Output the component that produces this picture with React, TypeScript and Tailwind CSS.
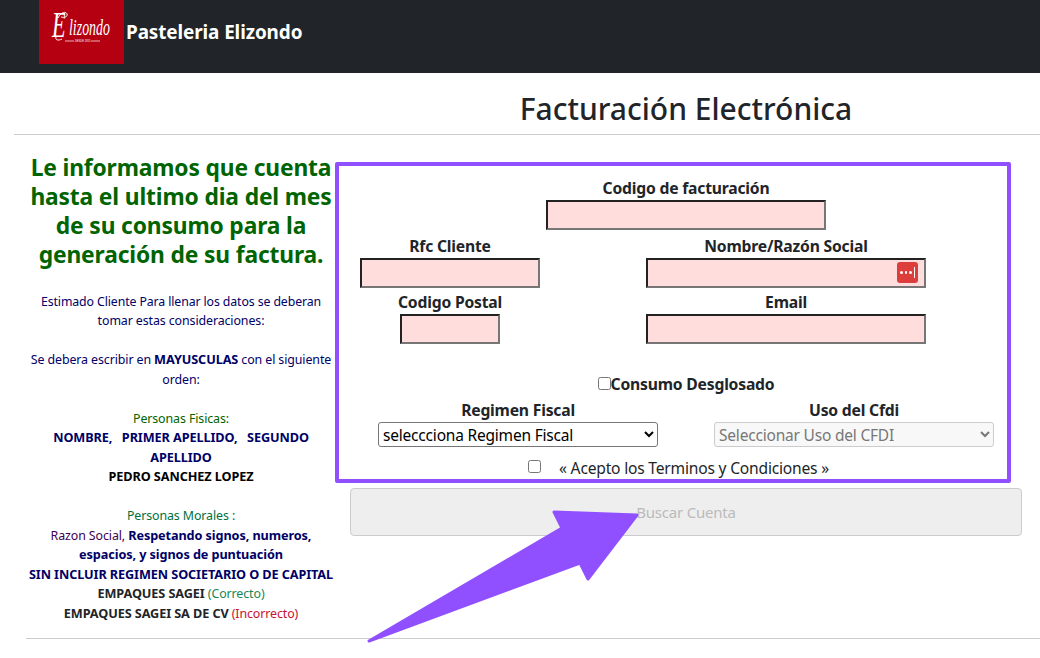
const inputBox =
  'block h-[30px] border-2 border-t-[#222222] border-l-[#222222] border-r-[#767676] border-b-[#767676] bg-[#ffdddd] outline-none'
const labelText = 'block h-6 text-center text-[15.7px] font-bold leading-6 tracking-[-0.2px] text-[#212529]'

function Logo() {
  return (
    <svg viewBox="0 0 85 64" className="h-16 w-[85px] shrink-0 bg-[#b50012]">
      <path d="M19 18c3-6 8-7 9-4s-3 4-6 3M17 37c-1 3 2 4 6 2" fill="none" stroke="#ffffff" strokeWidth="1" />
      <g transform="translate(13 37) scale(0.62 1)">
        <text fill="#ffffff" fontSize="36" fontStyle="italic" fontFamily="'Liberation Serif', serif">
          E
        </text>
      </g>
      <g transform="translate(30 35) scale(0.58 1)">
        <text fill="#ffffff" fontSize="24" fontStyle="italic" fontFamily="'Liberation Serif', serif">
          lizondo
        </text>
      </g>
      <path d="M26 41h9M52 41h9" stroke="#ffffff" strokeWidth="0.7" />
      <text x="36" y="42.2" fill="#ffffff" fontSize="2.6" fontFamily="'Liberation Sans', sans-serif">
        DESDE 1955
      </text>
    </svg>
  )
}

function Field({ label, width, children }: { label: string; width: string; children?: React.ReactNode }) {
  return (
    <div className="flex flex-col items-center">
      <label className={labelText}>{label}</label>
      <div className="relative">
        <input type="text" className={`${inputBox} ${width}`} />
        {children}
      </div>
    </div>
  )
}

function Notes() {
  return (
    <div className="w-[310px] shrink-0 pt-[18px] text-center">
      <h3 className="mb-[22.5px] text-[22.8px] font-bold leading-[29px] tracking-[-0.15px] text-[#006400]">
        <span className="block whitespace-nowrap">Le informamos que cuenta</span>
        <span className="block whitespace-nowrap">hasta el ultimo dia del mes</span>
        <span className="block whitespace-nowrap">de su consumo para la</span>
        <span className="block whitespace-nowrap">generación de su factura.</span>
      </h3>
      <div className="text-[12.4px] leading-[19.5px] tracking-[-0.1px] text-[#000066] [&_b]:text-[12.7px] [&>p]:whitespace-nowrap">
        <p className="text-[12.3px]">Estimado Cliente Para llenar los datos se deberan</p>
        <p>tomar estas consideraciones:</p>
        <p>&nbsp;</p>
        <p>
          Se debera escribir en <b>MAYUSCULAS</b> con el siguiente
        </p>
        <p>orden:</p>
        <p>&nbsp;</p>
        <p className="text-[#006400]">Personas Fisicas:</p>
        <p>
          <b>NOMBRE, &nbsp; PRIMER APELLIDO, &nbsp; SEGUNDO</b>
        </p>
        <p>
          <b>APELLIDO</b>
        </p>
        <p className="text-black">
          <b>PEDRO SANCHEZ LOPEZ</b>
        </p>
        <p>&nbsp;</p>
        <p className="text-[#00703c]">Personas Morales :</p>
        <p className="text-[#400050]">
          Razon Social, <b className="text-[#000066]">Respetando signos, numeros,</b>
        </p>
        <p>
          <b>espacios, y signos de puntuación</b>
        </p>
        <p>
          <b>SIN INCLUIR REGIMEN SOCIETARIO O DE CAPITAL</b>
        </p>
        <p className="text-[#212529]">
          <b>EMPAQUES SAGEI</b> <span className="text-[#198754]">(Correcto)</span>
        </p>
        <p className="text-[#212529]">
          <b>EMPAQUES SAGEI SA DE CV</b> <span className="text-[#c8102e]">(Incorrecto)</span>
        </p>
      </div>
    </div>
  )
}

function BillingForm() {
  return (
    <form className="ml-[14px] w-[672px] shrink-0 pt-[41px]">
      <Field label="Codigo de facturación" width="w-[280px]" />
      <div className="mt-1 grid grid-cols-[200px_1fr] gap-y-0.5">
        <Field label="Rfc Cliente" width="w-[180px]" />
        <Field label="Nombre/Razón Social" width="w-[280px]">
          <span className="absolute right-[8px] top-[4px] flex h-[21px] w-[21px] items-center justify-center gap-[2px] rounded-[3px] bg-[#dc3e3c]">
            <i className="size-[2.5px] rounded-full bg-white" />
            <i className="size-[2.5px] rounded-full bg-white" />
            <i className="size-[2.5px] rounded-full bg-white" />
            <i className="h-[11px] w-px bg-white" />
          </span>
        </Field>
        <Field label="Codigo Postal" width="w-[100px]" />
        <Field label="Email" width="w-[280px]" />
      </div>
      <div className="mt-7 flex h-6 items-center justify-center text-[15.7px] font-bold tracking-[-0.2px] text-[#212529]">
        <input type="checkbox" className="m-0 -mt-px size-[13px]" />
        <span className="mt-0.5">Consumo Desglosado</span>
      </div>
      <div className="mt-0.5 grid grid-cols-2">
        <div className="flex flex-col items-center">
          <label className={labelText}>Regimen Fiscal</label>
          <select className="h-[25px] w-[280px] rounded-[3px] border border-[#767676] bg-white text-[15.5px] tracking-[-0.2px] text-black">
            <option>seleccciona Regimen Fiscal</option>
          </select>
        </div>
        <div className="flex flex-col items-center">
          <label className={labelText}>Uso del Cfdi</label>
          <select
            disabled
            className="h-[25px] w-[280px] rounded-[3px] border border-[#cccccc] bg-[#f8f8f8] text-[15.5px] tracking-[-0.2px] text-[#777777]"
          >
            <option>Seleccionar Uso del CFDI</option>
          </select>
        </div>
      </div>
      <div className="mt-[9px] flex h-6 items-center justify-center pr-[15px] text-[15.6px] tracking-[-0.2px] text-[#212529]">
        <input type="checkbox" className="m-0 mr-[18px] -mt-1 size-[13px]" />
        <span className="mt-0.5">« Acepto los Terminos y Condiciones »</span>
      </div>
      <button
        type="button"
        disabled
        className="mt-2 block h-12 w-full rounded-[4px] border border-[#cccccc] bg-[#eeeeee] text-center text-[15px] tracking-[-0.2px] text-[#bbbbbb]"
      >
        Buscar Cuenta
      </button>
    </form>
  )
}

export default function App() {
  return (
    <div className="relative h-[658px] w-[1040px] overflow-hidden bg-white font-['Noto_Sans','Liberation_Sans',sans-serif]">
      <header className="flex h-[73px] items-start bg-[#212529] pl-[39px]">
        <Logo />
        <span className="ml-0.5 mt-[19px] text-[18.9px] font-bold leading-[26px] tracking-[-0.1px] text-white">Pasteleria Elizondo</span>
      </header>
      <div className="ml-[14px] h-[62px] border-b border-[#cccccc] pl-[336px] pt-[16px]">
        <h1 className="w-[672px] text-center text-[30px] font-medium leading-10 text-[#212529]">Facturación Electrónica</h1>
      </div>
      <main className="ml-[26px] flex h-[503px]">
        <Notes />
        <BillingForm />
      </main>
      <hr className="ml-[26px] border-[#cccccc]" />

      {/* marcado encima de la captura */}
      <div className="absolute left-[335px] top-[162px] h-[321px] w-[676px] rounded-[2px] border-4 border-[#9050ff]" />
      <svg className="absolute left-0 top-0 h-[658px] w-[1040px]" viewBox="0 0 1040 658">
        <path
          d="M369 641 L562 528 L554 512 L637 515 L588 579 L580 563 Z"
          fill="#9050ff"
          stroke="#9050ff"
          strokeWidth="3"
          strokeLinejoin="round"
        />
      </svg>
    </div>
  )
}
